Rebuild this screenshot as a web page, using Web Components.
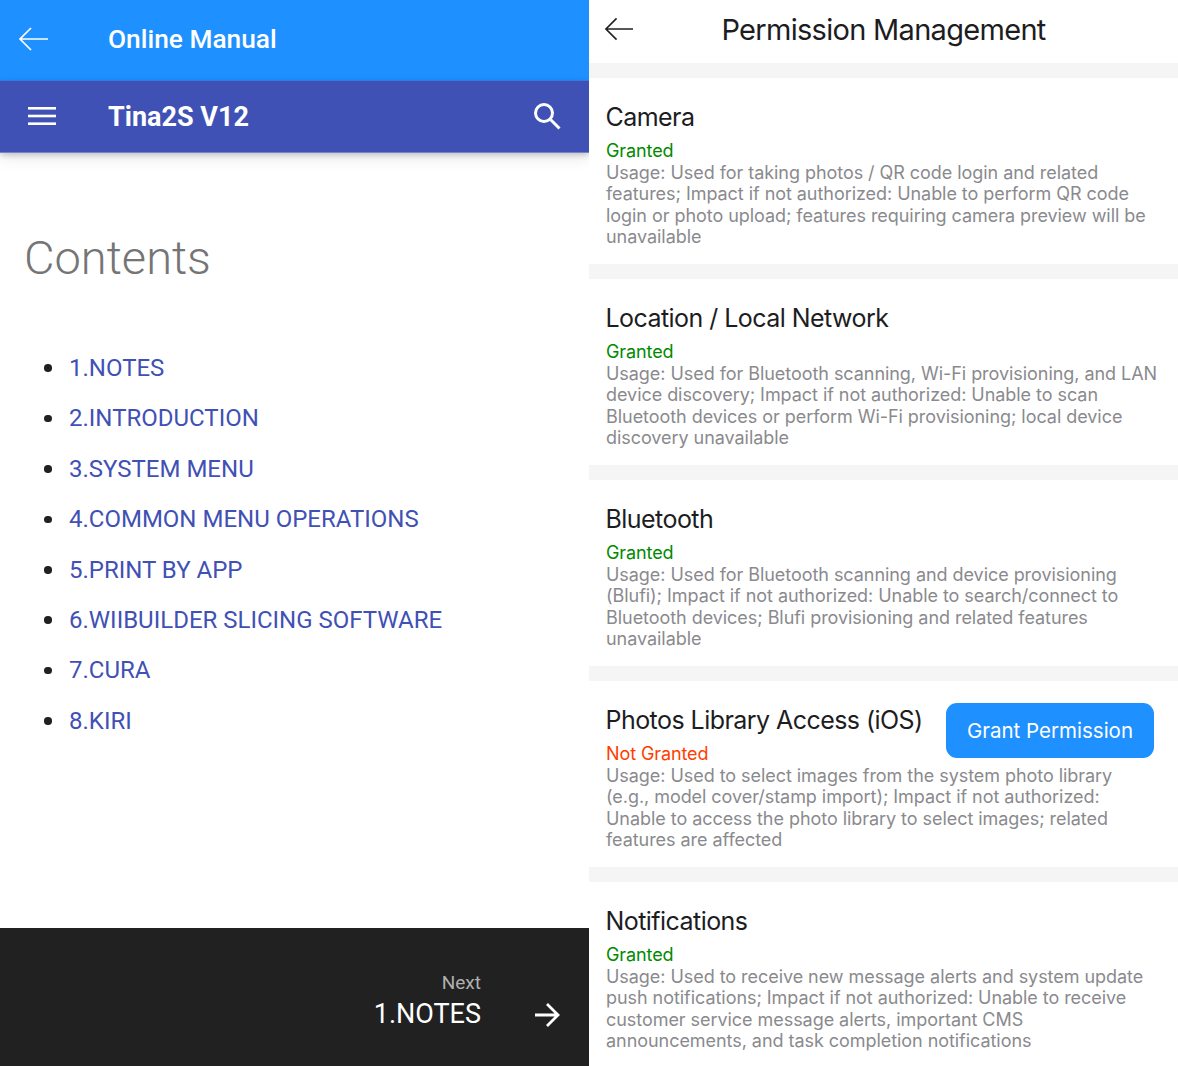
<!DOCTYPE html>
<html lang="en">
<head>
<meta charset="utf-8">
<title>Manual and permissions</title>
<style>
html, body { margin: 0; padding: 0; background: #fff; }
body { width: 1178px; height: 1066px; overflow: hidden; display: grid; grid-template-columns: 589px 589px; }
</style>
</head>
<body>
<manual-pane>
  <manual-link>1.NOTES</manual-link>
  <manual-link>2.INTRODUCTION</manual-link>
  <manual-link>3.SYSTEM MENU</manual-link>
  <manual-link>4.COMMON MENU OPERATIONS</manual-link>
  <manual-link>5.PRINT BY APP</manual-link>
  <manual-link>6.WIIBUILDER SLICING SOFTWARE</manual-link>
  <manual-link>7.CURA</manual-link>
  <manual-link>8.KIRI</manual-link>
</manual-pane>
<permission-pane>
  <permission-card name="Camera" status="Granted">Usage: Used for taking photos / QR code login and related features; Impact if not authorized: Unable to perform QR code login or photo upload; features requiring camera preview will be unavailable</permission-card>
  <permission-card name="Location / Local Network" status="Granted">Usage: Used for Bluetooth scanning, Wi-Fi provisioning, and LAN device discovery; Impact if not authorized: Unable to scan Bluetooth devices or perform Wi-Fi provisioning; local device discovery unavailable</permission-card>
  <permission-card name="Bluetooth" status="Granted">Usage: Used for Bluetooth scanning and device provisioning (Blufi); Impact if not authorized: Unable to search/connect to Bluetooth devices; Blufi provisioning and related features unavailable</permission-card>
  <permission-card name="Photos Library Access (iOS)" status="Not Granted" action="Grant Permission">Usage: Used to select images from the system photo library (e.g., model cover/stamp import); Impact if not authorized: Unable to access the photo library to select images; related features are affected</permission-card>
  <permission-card name="Notifications" status="Granted">Usage: Used to receive new message alerts and system update push notifications; Impact if not authorized: Unable to receive customer service message alerts, important CMS announcements, and task completion notifications</permission-card>
</permission-pane>
<script>
const manualTemplate = document.createElement('template');
manualTemplate.innerHTML = `
<style>
:host { display: flex; flex-direction: column; height: 1066px; font-family: Roboto, "Liberation Sans", sans-serif; overflow: hidden; }
.top { height: 80px; flex: none; background: #1e90ff; color: #fff; display: flex; align-items: center; padding-bottom: 2px; box-sizing: border-box; }
.top svg { margin-left: 18px; width: 30px; height: 26px; }
.top span { margin-left: 60px; font-size: 26.3px; font-weight: 500; }
.bar { height: 72px; flex: none; background: #3f51b5; color: #fff; display: flex; align-items: center; box-shadow: 0 1px 0 #7683cf, 0 3px 6px rgba(0,0,0,.2), 0 7px 14px rgba(0,0,0,.08); position: relative; border-top: 1px solid #3a78dc; box-sizing: border-box; }
.bar .menu { margin-left: 28px; width: 28px; height: 20px; margin-top: -1px; }
.bar .name { margin-left: 52px; font-size: 27px; font-weight: 700; flex: 1; }
.bar .search { margin-right: 27px; width: 30px; height: 30px; margin-top: -2px; }
main { flex: 1; padding: 74px 0 0 24px; }
h1 { margin: 0; font-size: 47px; line-height: 64px; font-weight: 300; color: #757575; }
ul { margin: 53px 0 0 20px; padding: 0; list-style: none; }
.foot { height: 138px; flex: none; background: #212121; color: #fff; display: flex; justify-content: flex-end; align-items: flex-start; box-sizing: border-box; padding: 43px 28px 0 0; }
.foot .txt { text-align: right; }
.foot small { display: block; font-size: 19px; line-height: 24px; color: #b0b0b0; }
.foot b { display: block; font-weight: 400; font-size: 27px; line-height: 34px; margin-top: 2px; }
.foot svg { width: 28px; height: 28px; margin: 30px 0 0 52px; }
</style>
<div class="top">
  <svg viewBox="0 0 30 26" fill="none" stroke="#fff" stroke-width="1.7"><path d="M30 13H2M13 2 2 13l11 11"/></svg>
  <span>Online Manual</span>
</div>
<div class="bar">
  <svg class="menu" viewBox="0 0 28 20" fill="#fff"><rect y="1" width="28" height="2.6"/><rect y="8.7" width="28" height="2.6"/><rect y="16.4" width="28" height="2.6"/></svg>
  <span class="name">Tina2S V12</span>
  <svg class="search" viewBox="0 0 30 30" fill="none" stroke="#fff" stroke-width="3"><circle cx="12" cy="12" r="8.5"/><path d="m18 18 9.5 9.5"/></svg>
</div>
<main>
  <h1>Contents</h1>
  <ul><slot></slot></ul>
</main>
<div class="foot">
  <div class="txt"><small>Next</small><b>1.NOTES</b></div>
  <svg viewBox="0 0 28 28" fill="none" stroke="#fff" stroke-width="2.8"><path d="M2 14h23M14 3l11 11-11 11"/></svg>
</div>`;

class ManualPane extends HTMLElement {
  constructor() {
    super();
    this.attachShadow({ mode: 'open' }).appendChild(manualTemplate.content.cloneNode(true));
  }
}

const linkTemplate = document.createElement('template');
linkTemplate.innerHTML = `
<style>
:host { display: flex; align-items: center; gap: 17.5px; height: 50.4px; line-height: 50.4px; font-size: 24px; color: #3f51b5; }
i { width: 7.5px; height: 7.5px; border-radius: 50%; background: #212121; flex: none; }
</style>
<i></i><span><slot></slot></span>`;

class ManualLink extends HTMLElement {
  constructor() {
    super();
    this.attachShadow({ mode: 'open' }).appendChild(linkTemplate.content.cloneNode(true));
  }
}

const permissionTemplate = document.createElement('template');
permissionTemplate.innerHTML = `
<style>
:host { display: block; height: 1066px; overflow: hidden; background: #fff; font-family: Inter, "Liberation Sans", sans-serif; }
header { height: 63px; display: flex; align-items: center; justify-content: center; position: relative; padding-bottom: 5px; box-sizing: border-box; font-size: 29px; color: #1d1d1f; letter-spacing: -.7px; }
header svg { position: absolute; left: 15px; top: 16px; width: 29px; height: 26px; }
.list { display: flex; flex-direction: column; }
</style>
<header>
  <svg viewBox="0 0 30 26" fill="none" stroke="#222" stroke-width="1.7"><path d="M30 13H2M13 2 2 13l11 11"/></svg>
  <span>Permission Management</span>
</header>
<div class="list"><slot></slot></div>`;

class PermissionPane extends HTMLElement {
  constructor() {
    super();
    this.attachShadow({ mode: 'open' }).appendChild(permissionTemplate.content.cloneNode(true));
  }
}

const cardTemplate = document.createElement('template');
cardTemplate.innerHTML = `
<style>
:host { display: block; border-top: 15px solid #f5f5f5; position: relative; padding: 22px 20px 0 17px; height: 164px; }
.name { font-size: 25px; line-height: 34px; color: #1d1d1f; letter-spacing: -.55px; margin-left: -.5px; }
.status { font-size: 18px; line-height: 22px; margin-top: 6px; letter-spacing: -.1px; }
.status.on { color: #008a00; }
.status.off { color: #ff3d00; }
.desc { font-size: 18px; line-height: 21.3px; color: #8a8a8e; letter-spacing: -.05px; }
button { position: absolute; right: 24px; top: 22px; width: 208px; height: 55px; border: 0; border-radius: 11px; background: #1e90ff; color: #fff; font: inherit; font-size: 20.5px; padding: 0 0 1px; }
</style>
<div class="name"></div>
<div class="status"></div>
<div class="desc"><slot></slot></div>`;

class PermissionCard extends HTMLElement {
  constructor() {
    super();
    this._shadowRoot = this.attachShadow({ mode: 'open' });
    this._shadowRoot.appendChild(cardTemplate.content.cloneNode(true));
  }

  connectedCallback() {
    this._shadowRoot.querySelector('.name').textContent = this.getAttribute('name');
    const status = this._shadowRoot.querySelector('.status');
    status.textContent = this.getAttribute('status');
    status.classList.add(this.getAttribute('status') === 'Granted' ? 'on' : 'off');
    if (this.hasAttribute('action')) {
      const button = document.createElement('button');
      button.textContent = this.getAttribute('action');
      this._shadowRoot.appendChild(button);
    }
  }
}

customElements.define('manual-pane', ManualPane);
customElements.define('manual-link', ManualLink);
customElements.define('permission-pane', PermissionPane);
customElements.define('permission-card', PermissionCard);
</script>
</body>
</html>
